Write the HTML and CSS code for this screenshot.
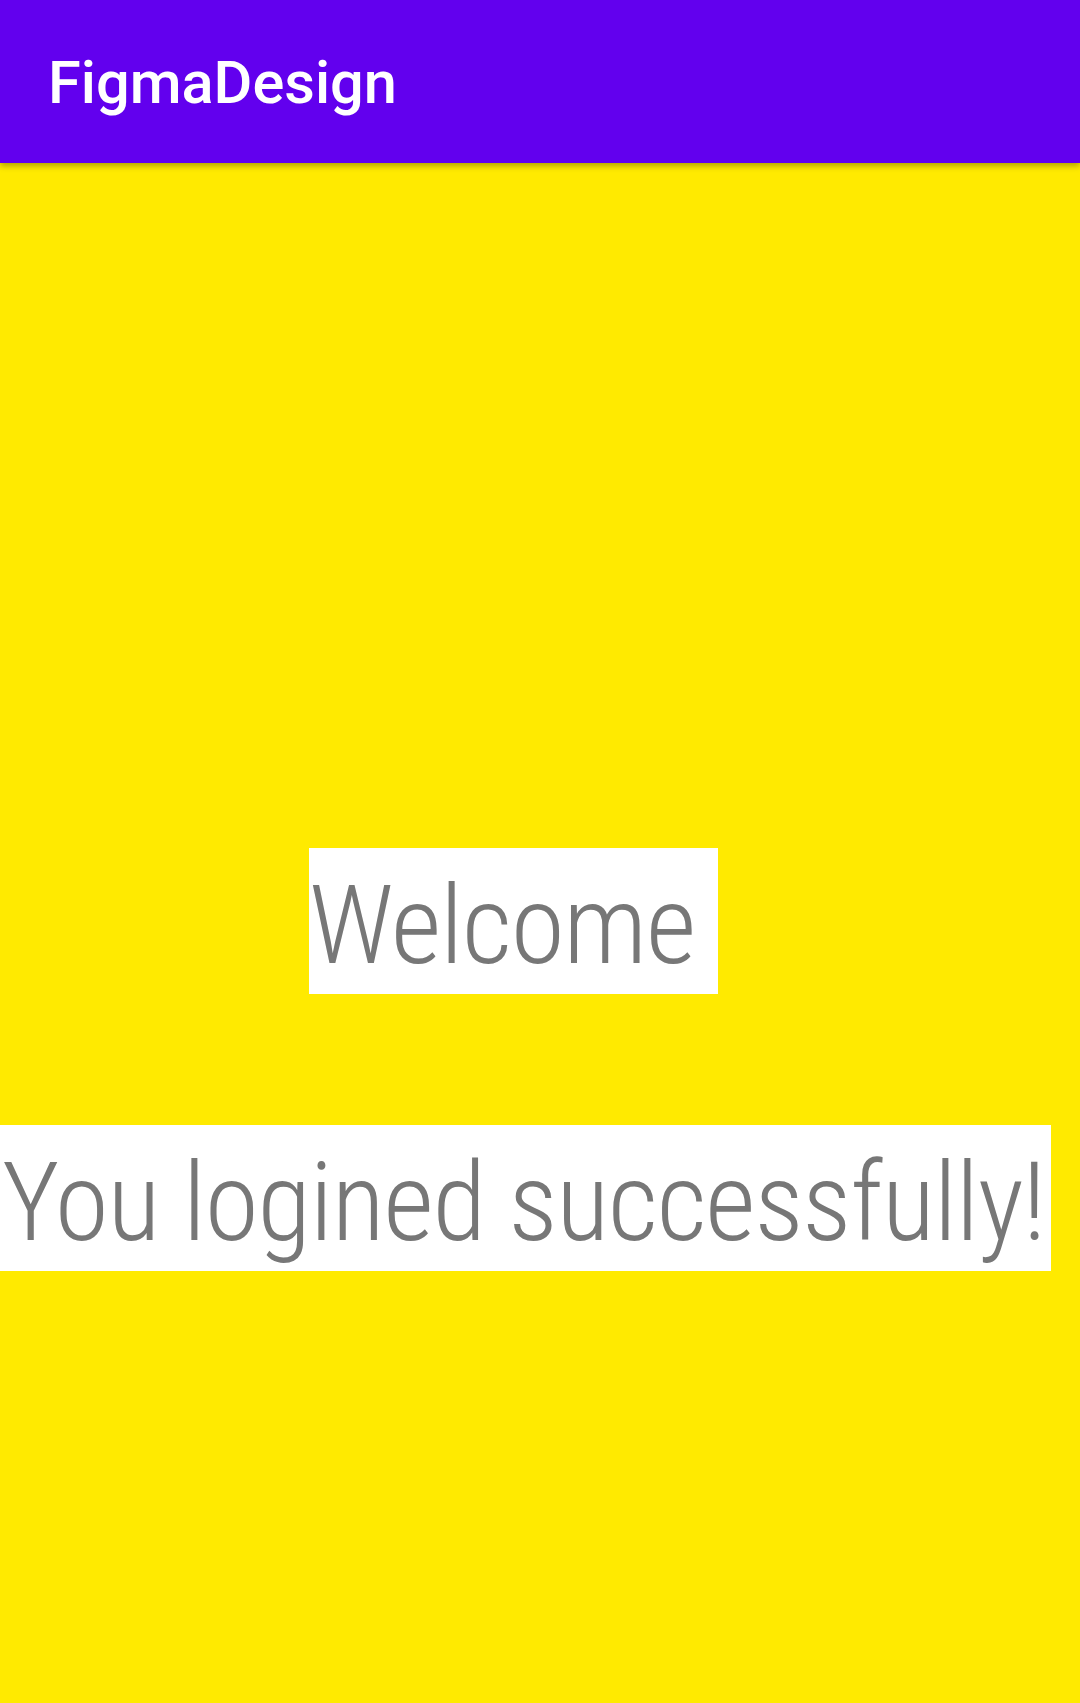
FILE: index.html
```html
<!DOCTYPE html>
<html>
<head>
<meta charset="utf-8">
<link rel="stylesheet" href="styles.css">
</head>
<body>
<header class="appbar"><h1 class="title">FigmaDesign</h1></header>
<main class="content">
  <div class="welcome-row"><span class="label welcome">Welcome</span></div>
  <div class="message-row"><span class="label message">You logined successfully!</span></div>
</main>
</body>
</html>
```
FILE: styles.css
```css
html, body { margin: 0; padding: 0; }
body {
  width: 1080px;
  height: 1703px;
  background: #ffea00;
  overflow: hidden;
  font-family: Roboto, "Noto Sans", sans-serif;
}
.appbar {
  position: relative;
  z-index: 2;
  height: 163px;
  background: #6200ee;
  box-shadow: 0 3px 6px rgba(0,0,0,0.3);
  display: flex;
  align-items: center;
  padding-left: 48px;
}
.title {
  margin: 0;
  color: #ffffff;
  font-weight: 500;
  font-size: 59.5px;
  line-height: 1;
  padding-top: 4px;
}
.content {
  display: flex;
  flex-direction: column;
  padding-top: 685px;
}
.welcome-row { padding-left: 309px; }
.message-row { padding-top: 131px; }
.label {
  display: inline-block;
  background: #ffffff;
  color: #777777;
  font-weight: 300;
  font-stretch: 75%;
  font-size: 110px;
  letter-spacing: -1.26px;
  line-height: 136px;
  padding-top: 10px;
  white-space: nowrap;
}
.welcome { padding-right: 23px; }
.message { padding-left: 2px; padding-right: 6px; }
```
